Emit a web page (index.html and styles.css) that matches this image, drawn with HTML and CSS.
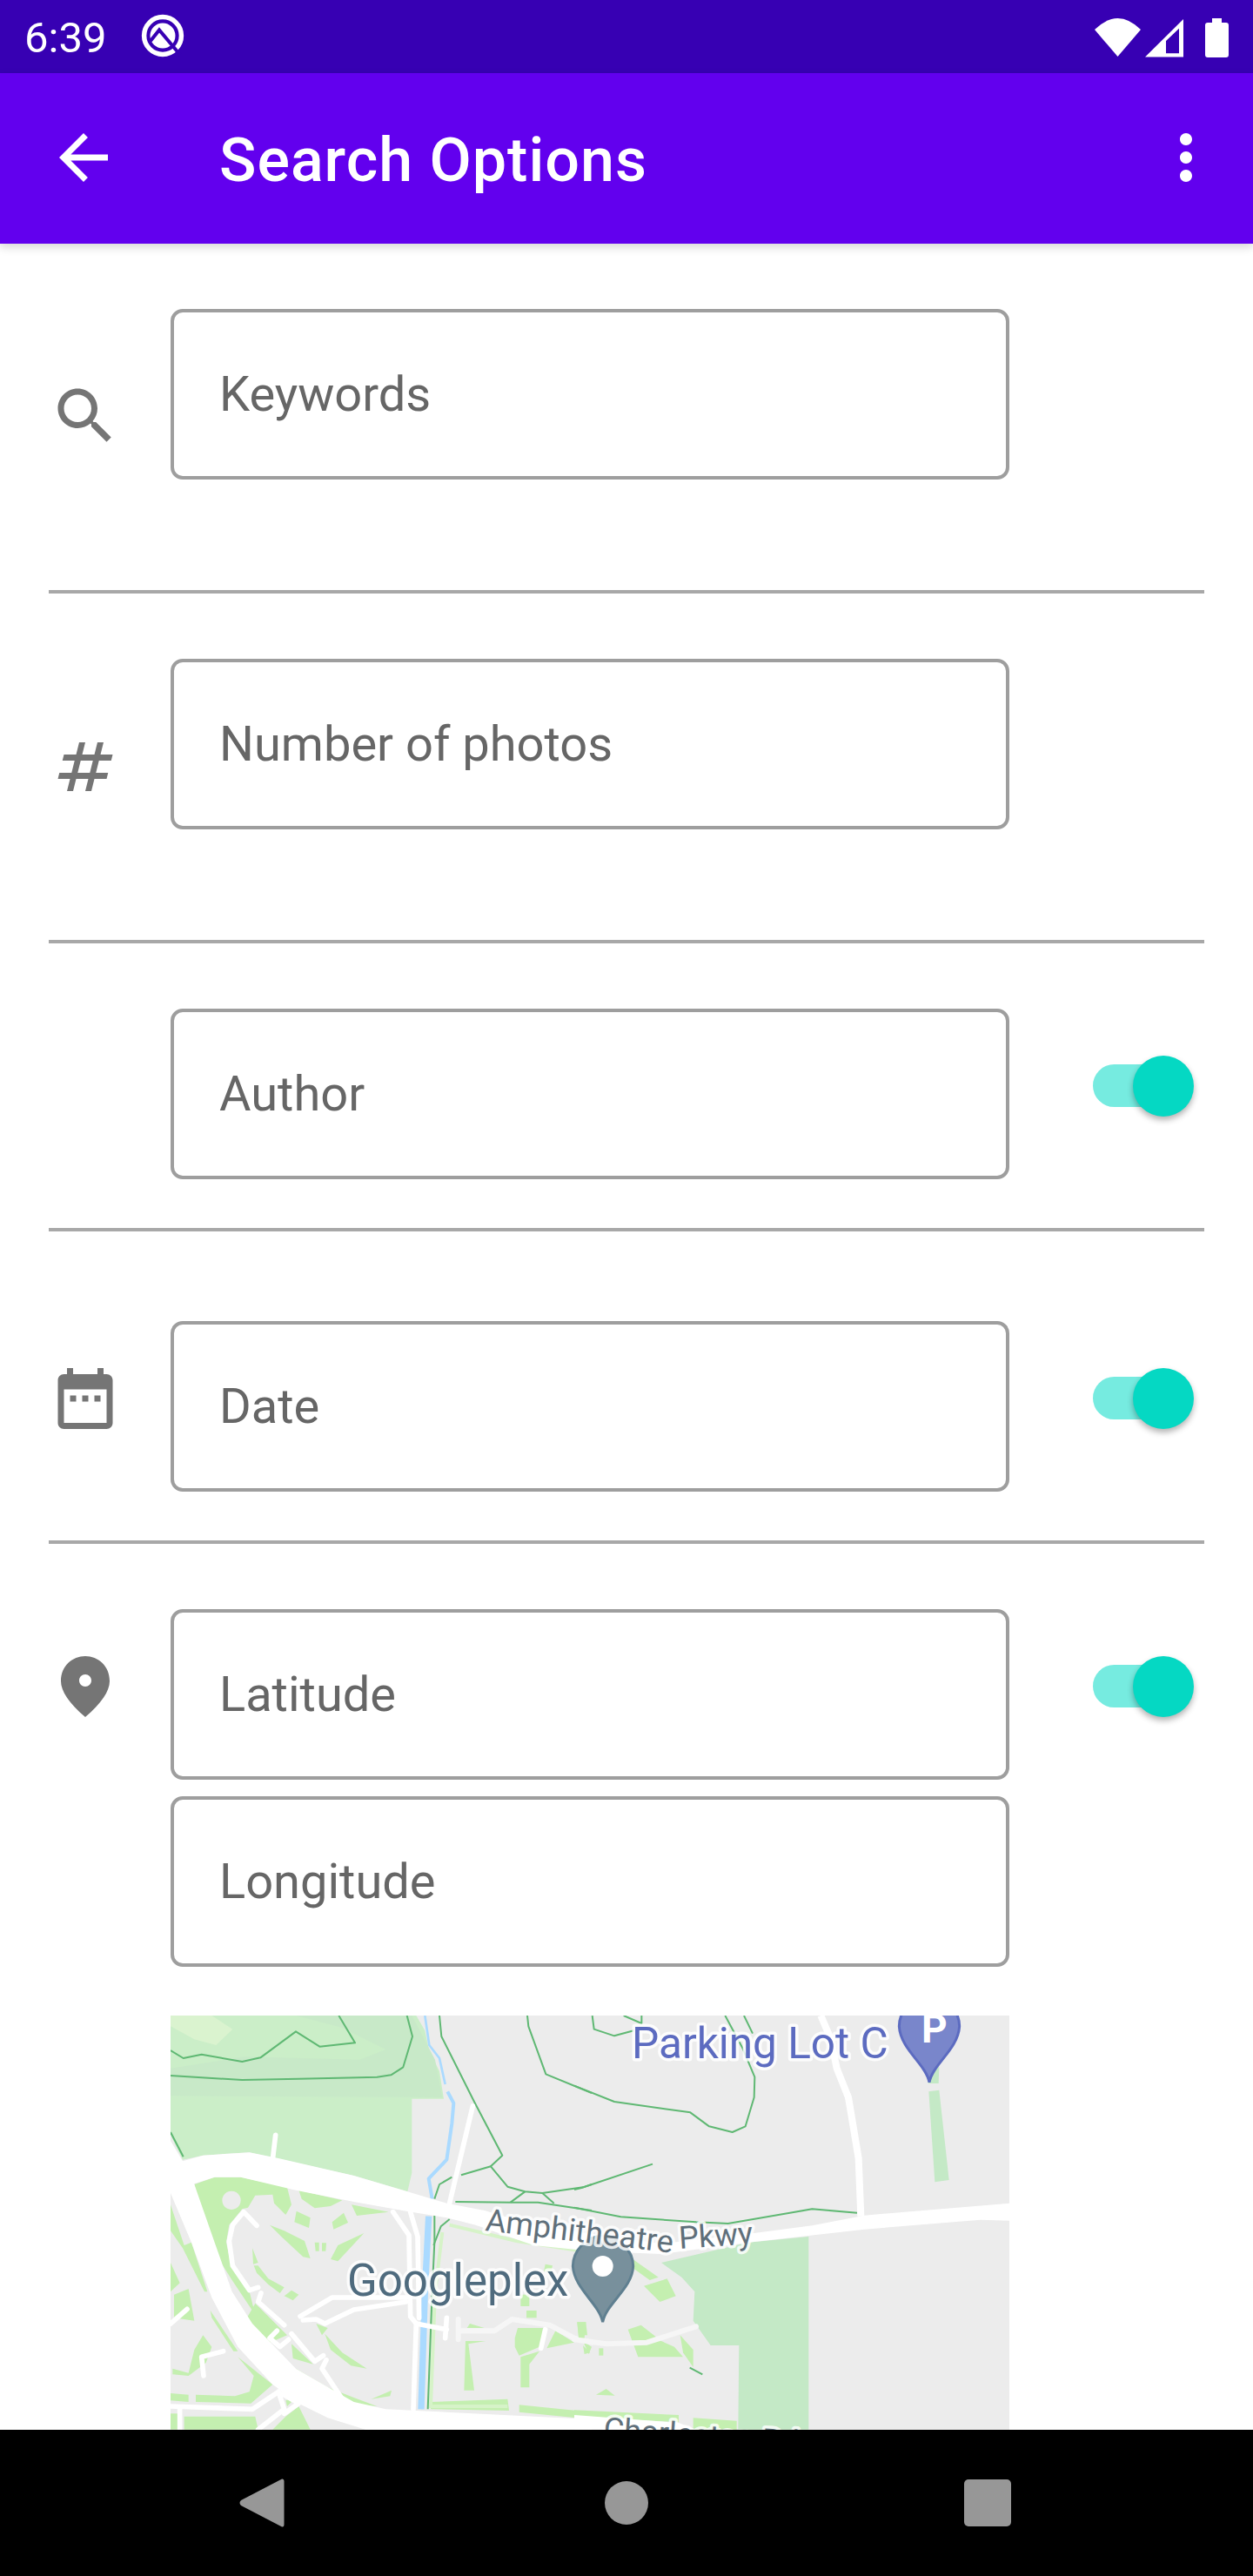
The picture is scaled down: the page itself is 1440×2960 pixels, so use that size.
FILE: index.html
```html
<!DOCTYPE html>
<html lang="en">
<head>
<meta charset="utf-8">
<title>Search Options</title>
<link rel="stylesheet" href="styles.css">
</head>
<body>
<div class="screen">
  <div class="statusbar">
    <span class="time">6:39</span>
    <svg class="q-logo" viewBox="0 0 65 65" width="65" height="65">
      <circle class="q-ring" cx="32" cy="31" r="21.4"/>
      <circle class="q-disc" cx="32" cy="31" r="14.5"/>
      <path class="q-cut" d="M18 37L28 24.5L52 53"/>
    </svg>
    <svg class="status-icons" viewBox="1250 10 170 60" width="170" height="60">
      <path class="white" d="M1258 32Q1284.5 6 1311 32L1284.5 63Z"/>
      <path class="white" fill-rule="evenodd" d="M1316 63.5L1360 20V63.5ZM1340 45V59.3H1355V30.7Z"/>
      <path class="white" d="M1393 19H1404V24H1409Q1412 24 1412 27V61Q1412 64 1409 64H1388Q1385 64 1385 61V27Q1385 24 1388 24H1393Z"/>
    </svg>
  </div>
  <header class="toolbar">
    <svg class="back" viewBox="0 0 24 24" width="84" height="84"><path class="white" d="M20 11H7.83l5.59-5.59L12 4l-8 8 8 8 1.41-1.41L7.83 13H20v-2z"/></svg>
    <h1 class="title">Search Options</h1>
    <svg class="more" viewBox="0 0 24 24" width="84" height="84"><path class="white" d="M12 8c1.1 0 2-.9 2-2s-.9-2-2-2-2 .9-2 2 .9 2 2 2zm0 2c-1.1 0-2 .9-2 2s.9 2 2 2 2-.9 2-2-.9-2-2-2zm0 6c-1.1 0-2 .9-2 2s.9 2 2 2 2-.9 2-2-.9-2-2-2z"/></svg>
  </header>
  <main class="content">
    <section class="row row-tall">
      <div class="lead"><svg class="icon icon-search" viewBox="0 0 24 24" width="84" height="84"><path d="M15.5 14h-.79l-.28-.27C15.41 12.59 16 11.11 16 9.5 16 5.91 13.09 3 9.5 3S3 5.91 3 9.5 5.91 16 9.5 16c1.61 0 3.09-.59 4.23-1.57l.27.28v.79l5 4.99L20.49 19l-4.99-5zm-6 0C7.01 14 5 11.99 5 9.5S7.01 5 9.5 5 14 7.01 14 9.5 11.99 14 9.5 14z"/></svg></div>
      <div class="fields"><div class="field">Keywords</div></div>
    </section>
    <section class="row row-tall">
      <div class="lead"><svg class="icon icon-hash" viewBox="0 0 24 24" width="84" height="84"><path d="M20.5 10l.5-2h-4l1-4h-2l-1 4h-4l1-4h-2L9 8H5l-.5 2h4l-1 4h-4L3 16h4l-1 4h2l1-4h4l-1 4h2l1-4h4l.5-2h-4l1-4h4zm-7 4h-4l1-4h4l-1 4z"/></svg></div>
      <div class="fields"><div class="field">Number of photos</div></div>
    </section>
    <section class="row">
      <div class="lead"></div>
      <div class="fields"><div class="field">Author</div></div>
      <div class="switch"><div class="thumb"></div></div>
    </section>
    <section class="row row-date">
      <div class="lead"><svg class="icon icon-side" viewBox="0 0 24 24" width="84" height="84"><path d="M9 11H7v2h2v-2zm4 0h-2v2h2v-2zm4 0h-2v2h2v-2zm2-7h-1V2h-2v2H8V2H6v2H5c-1.11 0-1.99.9-1.99 2L3 20c0 1.1.89 2 2 2h14c1.1 0 2-.9 2-2V6c0-1.1-.9-2-2-2zm0 16H5V9h14v11z"/></svg></div>
      <div class="fields"><div class="field">Date</div></div>
      <div class="switch"><div class="thumb"></div></div>
    </section>
    <section class="row row-last">
      <div class="lead"><svg class="icon icon-side" viewBox="0 0 24 24" width="84" height="84"><path d="M12 2c-4.2 0-8 3.22-8 8.2 0 3.32 2.67 7.25 8 11.8 5.33-4.55 8-8.48 8-11.8C20 5.22 16.2 2 12 2zm0 10c-1.1 0-2-.9-2-2s.9-2 2-2 2 .9 2 2-.9 2-2 2z"/></svg></div>
      <div class="fields">
        <div class="field">Latitude</div>
        <div class="field">Longitude</div>
        <svg class="map" viewBox="196 2316 964 476" width="964" height="476">
          <rect class="m-bg" x="196" y="2316" width="964" height="476"/>
          <g transform="translate(180 2300) scale(.33333)">
            <polygon class="m-park" points="48,48 895,48 925,100 940,170 975,240 990,335 880,335 880,590 865,655 680,600 320,520 160,530 90,545 48,460"/>
            <polygon class="m-park-dark" points="480,48 880,48 960,200 985,330 48,325 48,230 300,190 700,200 790,165 640,90"/>
            <polygon class="m-park-light" points="48,48 190,48 262,95 205,150 130,130 48,85"/>
            <g class="m-bright">
              <path fill-rule="evenodd" d="M130 630L200 605 290 605 450 640 465 700 445 735 405 695 400 665 340 668 315 710 295 715 250 770 240 830 260 920 320 1000 340 1080 260 960 190 850ZM258 653a32 32 0 1 0 .1 0Z"/>
              <polygon points="490,650 640,685 600,705 545,712 500,680"/>
              <polygon points="672,700 800,725 690,738"/>
              <polygon points="482,722 530,745 525,780 475,760"/>
              <polygon points="605,760 645,728 660,762 610,785"/>
              <polygon points="390,770 440,790 510,825 530,885 505,880 430,810"/>
              <polygon points="545,830 560,830 560,860 548,860"/>
              <polygon points="570,832 585,832 583,860 570,860"/>
              <polygon points="600,888 625,840 715,798 625,895"/>
              <polygon points="330,850 350,900 333,905"/>
              <polygon points="335,910 345,935 385,975 425,1005 440,985 385,955 350,910"/>
              <polygon points="440,1015 465,995 490,1010 470,1030"/>
              <polygon points="48,700 95,840 120,830 175,1000 165,1000 90,850 48,790"/>
              <polygon points="48,900 80,970 48,1000"/>
              <polygon points="60,1010 110,990 130,1100 60,1090"/>
              <polygon points="185,1065 280,1205 265,1205 190,1090"/>
              <polygon points="340,1040 450,1150 380,1180 300,1110"/>
              <polygon points="55,1265 110,1280 130,1200 160,1150 190,1190 170,1245 110,1290 55,1285"/>
              <polygon points="280,1225 335,1290 320,1345 270,1360 135,1355 135,1380 325,1385 400,1320"/>
              <polygon points="350,1125 410,1130 380,1180"/>
              <polygon points="465,1180 540,1250 470,1230"/>
              <polygon points="480,1265 590,1330 680,1365 760,1395 650,1385 480,1290"/>
              <polygon points="580,1145 640,1210 725,1265 670,1255 600,1200"/>
              <polygon points="550,1110 590,1125 570,1150"/>
              <polygon points="48,1350 110,1355 110,1380 48,1375"/>
              <polygon points="48,1420 75,1420 75,1475 48,1475"/>
              <polygon points="95,1430 340,1430 350,1475 95,1475"/>
              <polygon points="445,1375 480,1365 450,1395"/>
              <polygon points="445,1430 490,1395 530,1475 400,1475"/>
              <polygon points="740,1370 810,1340 805,1360"/>
              <polygon points="1235,1160 1245,1125 1345,1125 1320,1190 1250,1220 1235,1190"/>
              <polygon points="1345,1195 1375,1135 1440,1175"/>
              <polygon points="1255,1225 1320,1205 1285,1250 1285,1330 1255,1330"/>
              <polygon points="1065,1170 1135,1170 1075,1180 1095,1340 1060,1340"/>
              <polygon points="1275,1065 1310,1065 1310,1090 1275,1090"/>
              <polygon points="1450,1105 1480,1105 1485,1150 1455,1150"/>
              <polygon points="1470,1170 1500,1190 1490,1215"/>
              <polygon points="1340,905 1365,910 1360,935 1335,930"/>
              <polygon points="1255,1010 1285,1010 1285,1050 1255,1050"/>
              <polygon points="1080,1110 1130,1125 1070,1125"/>
              <polygon points="1250,1390 1500,1415 1500,1440 1250,1415"/>
              <polygon points="945,1380 1210,1370 1215,1410 945,1405"/>
            </g>
            <path class="m-bright-line" d="M1010 770L1240 825 1470 860M985 795L960 1000 945 1395H1210"/>
            <path class="m-river-thin" d="M925 48L940 150 975 195 995 285"/>
            <path class="m-river" d="M1003 310L1024 350 1018 420 1000 545 938 610 950 680"/>
            <path class="m-river-wide" d="M938 740L925 1000 912 1405"/>
            <g class="m-trail">
              <path d="M48 168L92 195 155 182 295 207 358 193 480 103 562 155 684 142 628 48"/>
              <path d="M48 255L295 270 490 266 760 260 808 253 850 226 882 120 863 48"/>
              <path d="M975 48L982 120 1095 345 1192 530 1152 568 1210 638 1270 655 1330 660 1470 640 1500 630"/>
              <path d="M1278 48L1282 85 1342 250 1500 315"/>
              <path d="M1152 568L1050 598M1018 605L975 630 958 680"/>
              <path d="M1030 690L1220 692 1315 692 1500 720"/>
              <path d="M1220 692L1270 655M1330 660L1370 695"/>
              <path d="M48 450L92 535"/>
              <path d="M958 735V830L950 1000 935 1405"/>
              <path d="M1010 750L980 775 955 840"/>
            </g>
            <g class="m-road">
              <path d="M1090 360L1010 695"/>
              <path d="M410 460L400 545"/>
              <path d="M345 772L300 725 262 770 250 825 262 910 320 995 350 985"/>
              <path d="M360 1005L350 1035 440 1115"/>
              <path d="M495 1085L605 1020H860"/>
              <path d="M505 1098L550 1095 580 1110 680 1062 860 1035"/>
              <path d="M815 725L870 805 875 1085 895 1110 885 1405"/>
              <path d="M875 725L900 810 905 1090"/>
              <path d="M895 1110L1000 1130M1000 1090L995 1160"/>
              <path d="M1340 1130L1325 1195"/>
              <path d="M48 1110L105 1060"/>
              <path d="M230 1205L155 1225 162 1290"/>
              <path d="M415 1135L390 1160 425 1190 455 1165"/>
              <path d="M465 1145L545 1240 575 1220"/>
              <path d="M585 1235L570 1265 640 1370"/>
              <path d="M48 1395L330 1405 420 1345 440 1405 350 1475"/>
              <path d="M80 1405V1475"/>
              <path d="M490 1385L440 1420M420 1345L490 1385"/>
            </g>
            <path class="m-road-pale" d="M1040 1095V1165M1040 1135H1165L1225 1095 1355 1115 1440 1160 1500 1175"/>
            <polygon class="m-main" points="48,480 90,550 130,630 200,830 260,1000 330,1110 480,1265 610,1340 680,1380 790,1405 1500,1440 1500,1475 720,1475 590,1435 490,1385 400,1320 280,1190 190,1020 120,830 48,660"/>
            <polygon class="m-main" points="48,585 90,550 160,530 320,520 420,540 680,600 865,655 1000,695 1130,720 1300,770 1500,800 1500,860 1300,840 1100,770 1000,745 860,722 680,690 480,650 290,605 200,605 130,628"/>
          </g>
          <g transform="translate(660 2300) scale(.33333)">
            <polygon class="m-block" points="300,900 600,830 808,810 808,1475 565,1475 568,1185 470,1185 410,1100 415,1000 370,950"/>
            <polygon class="m-block" points="1222,310 1258,305 1292,615 1243,622"/>
            <polygon class="m-block" points="1220,230 1258,225 1256,282 1220,282"/>
            <g class="m-bright">
              <polygon points="205,890 290,950 260,960 190,910"/>
              <polygon points="240,980 320,955 350,1015 295,1035"/>
              <polygon points="185,1130 230,1115 300,1170 345,1190 375,1225 220,1225"/>
              <polygon points="365,1150 410,1200 410,1260 375,1210"/>
              <polygon points="10,1105 40,1105 35,1160 15,1160"/>
              <polygon points="30,1185 55,1210 35,1215"/>
              <polygon points="85,1195 100,1195 100,1220 85,1220"/>
              <polygon points="75,1355 110,1335 140,1358"/>
              <polygon points="0,1408 360,1425 360,1450 0,1430"/>
              <polygon points="410,1435 560,1445 560,1475 410,1475"/>
            </g>
            <path class="m-road-pale" d="M0 1165L110 1180 250 1175 420 1120"/>
            <g class="m-trail">
              <path d="M62 48L68 95 138 118 205 100"/>
              <path d="M170 48L232 75V48"/>
              <path d="M0 290L138 345 400 382 465 430 545 450 590 430 620 330 622 260 580 160 520 48"/>
              <path d="M585 48L615 110"/>
              <path d="M0 648L25 642 270 560"/>
              <path d="M0 710L160 742 420 760 530 765 820 715 975 728"/>
              <path d="M398 1262L442 1285"/>
            </g>
            <path class="m-road-mid" d="M850 48L885 130 905 230 945 330 980 540 988 740"/>
            <polygon class="m-main" points="300,835 620,798 820,772 1000,737 1500,695 1500,755 1400,752 1000,785 620,828 300,870 60,860 60,800"/>
            <polygon class="m-main" points="0,1425 360,1452 420,1475 0,1475"/>
            <path class="m-pin-grey" d="M98 1105C85 1040 0 990-5 912-5 860 40 808 98 808S203 860 203 912C200 990 110 1040 98 1105Z"/>
            <circle class="m-pin-hole" cx="98" cy="912" r="36"/>
            <path class="m-pin-blue" d="M1224 278C1212 215 1125 165 1120 85 1120 30 1170-20 1224-20S1328 30 1328 85C1323 165 1236 215 1224 278Z"/>
          </g>
          <text class="m-label m-amph" x="557" y="2563" transform="rotate(6.8 557 2563)">Amphitheatre</text>
          <text class="m-label m-amph" x="781" y="2584" transform="rotate(-4 781 2584)">Pkwy</text>
          <text class="m-label m-amph" x="693" y="2803" transform="rotate(4 693 2803)">Charleston Rd</text>
          <text class="m-label m-google" x="399" y="2638">Googleplex</text>
          <text class="m-label m-parking" x="726" y="2365">Parking Lot C</text>
          <text class="m-p" x="1059" y="2347">P</text>
        </svg>
      </div>
      <div class="switch"><div class="thumb"></div></div>
    </section>
  </main>
  <nav class="navbar">
    <svg class="nav-back" viewBox="0 0 52 56" width="52" height="56"><path class="nav-shape" d="M49 0.5Q51.500 0 51.500 3V53Q51.500 56 49 55.500L2 31Q-1 28 2 25Z"/></svg>
    <svg class="nav-home" viewBox="0 0 50 50" width="50" height="50"><circle class="nav-shape" cx="25" cy="25" r="25"/></svg>
    <svg class="nav-recent" viewBox="0 0 54 54" width="54" height="54"><rect class="nav-shape" width="54" height="54" rx="5"/></svg>
  </nav>
</div>
</body>
</html>
```

FILE: styles.css
```css
* { box-sizing: border-box; }
html, body { margin: 0; padding: 0; background: #fff; }
.screen {
  width: 1440px; height: 2960px; display: flex; flex-direction: column;
  overflow: hidden; font-family: Roboto, "Noto Sans", sans-serif;
}
.white { fill: #fff; }

.statusbar {
  height: 84px; flex: none; display: flex; align-items: center;
  background: #3700b3; color: #fff; padding-left: 28px;
}
.time { font-size: 49px; line-height: 84px; margin-top: 4px; }
.q-logo { margin-left: 33px; }
.q-ring { fill: none; stroke: #fff; stroke-width: 5.5; }
.q-disc { fill: #fff; }
.q-cut { fill: none; stroke: #3700b3; stroke-width: 4; }
.status-icons { margin-left: auto; margin-right: 20px; }

.toolbar {
  height: 196px; flex: none; display: flex; align-items: center; position: relative;
  background: #6200ee; box-shadow: 0 4px 10px rgba(0,0,0,.16);
}
.back { margin-left: 54px; margin-right: 114px; flex: none; margin-top: -2px; }
.title { margin: 4px 0 0; font-size: 70px; font-weight: 500; letter-spacing: 1px; color: #fff; line-height: 84px; }
.more { margin-left: auto; margin-right: 35px; margin-top: -2px; flex: none; }

.content { flex: 1; min-height: 0; overflow: hidden; background: #fff; }
.row {
  display: flex; align-items: flex-start; margin: 0 56px;
  padding: 75px 0 56px; border-bottom: 4px solid #a8a8a8;
}
.row-tall { padding-bottom: 127px; }
.row-date { padding-top: 103px; }
.row-last { border-bottom: 0; padding-bottom: 0; }
.lead { width: 140px; flex: none; }
.icon { display: block; fill: #757575; }
.icon-search { margin-top: 81px; }
.icon-hash { margin-top: 82px; }
.icon-side { margin-top: 47px; }
.fields { width: 964px; flex: none; display: flex; flex-direction: column; gap: 19px; }
.field {
  height: 196px; border: 4px solid #9e9e9e; border-radius: 14px; padding-left: 52px;
  display: flex; align-items: center; font-size: 56px; color: #666;
}
.switch {
  width: 112px; height: 49px; margin: 64px 0 0 96px; flex: none; border-radius: 25px;
  background: #76ebe0; display: flex; align-items: center; justify-content: flex-end;
}
.thumb {
  width: 70px; height: 70px; flex: none; border-radius: 50%; margin-right: -4px;
  background: #05d8c3; box-shadow: 0 4px 7px rgba(0,0,0,.3);
}

.map { display: block; margin-top: 37px; flex: none; }
.m-bg { fill: #ececec; }
.m-park { fill: #cbeec8; }
.m-park-dark { fill: #c8e9c8; }
.m-park-light { fill: #daf3cf; }
.m-block { fill: #c4e9c6; }
.m-bright { fill: #c4efb0; }
.m-bright-line { fill: none; stroke: #d6f3c8; stroke-width: 12; }
.m-river-thin, .m-river, .m-river-wide { fill: none; stroke: #aadaff; stroke-linejoin: round; }
.m-river-thin { stroke-width: 8; }
.m-river { stroke-width: 12; }
.m-river-wide { stroke-width: 22; }
.m-trail { fill: none; stroke: #5fb873; stroke-width: 6; stroke-linejoin: round; }
.m-road, .m-road-pale, .m-road-mid { fill: none; stroke: #fff; stroke-width: 17; stroke-linecap: round; stroke-linejoin: round; }
.m-road-pale { stroke: #f6f6f6; stroke-width: 18; }
.m-road-mid { stroke-width: 24; stroke-linecap: butt; }
.m-main { fill: #fff; }
.m-pin-grey { fill: #78909c; stroke: #5f7f90; stroke-width: 9; }
.m-pin-hole { fill: #fff; }
.m-pin-blue { fill: #7986cb; stroke: #5c6bc0; stroke-width: 9; }
.m-label { font-family: Roboto, sans-serif; paint-order: stroke; stroke: rgba(255,255,255,.82); stroke-width: 7px; stroke-linejoin: round; }
.m-amph { font-size: 36px; fill: #5f6f7a; }
.m-google { font-size: 51px; fill: #4f6b7e; }
.m-parking { font-size: 49.5px; fill: #5c6bc0; }
.m-p { font-family: Roboto, sans-serif; font-size: 46px; font-weight: 700; fill: #fff; }

.navbar { height: 168px; flex: none; background: #000; display: flex; align-items: center; padding-left: 275px; }
.nav-shape { fill: #979797; }
.nav-home { margin-left: 368px; }
.nav-recent { margin-left: 363px; }
```
